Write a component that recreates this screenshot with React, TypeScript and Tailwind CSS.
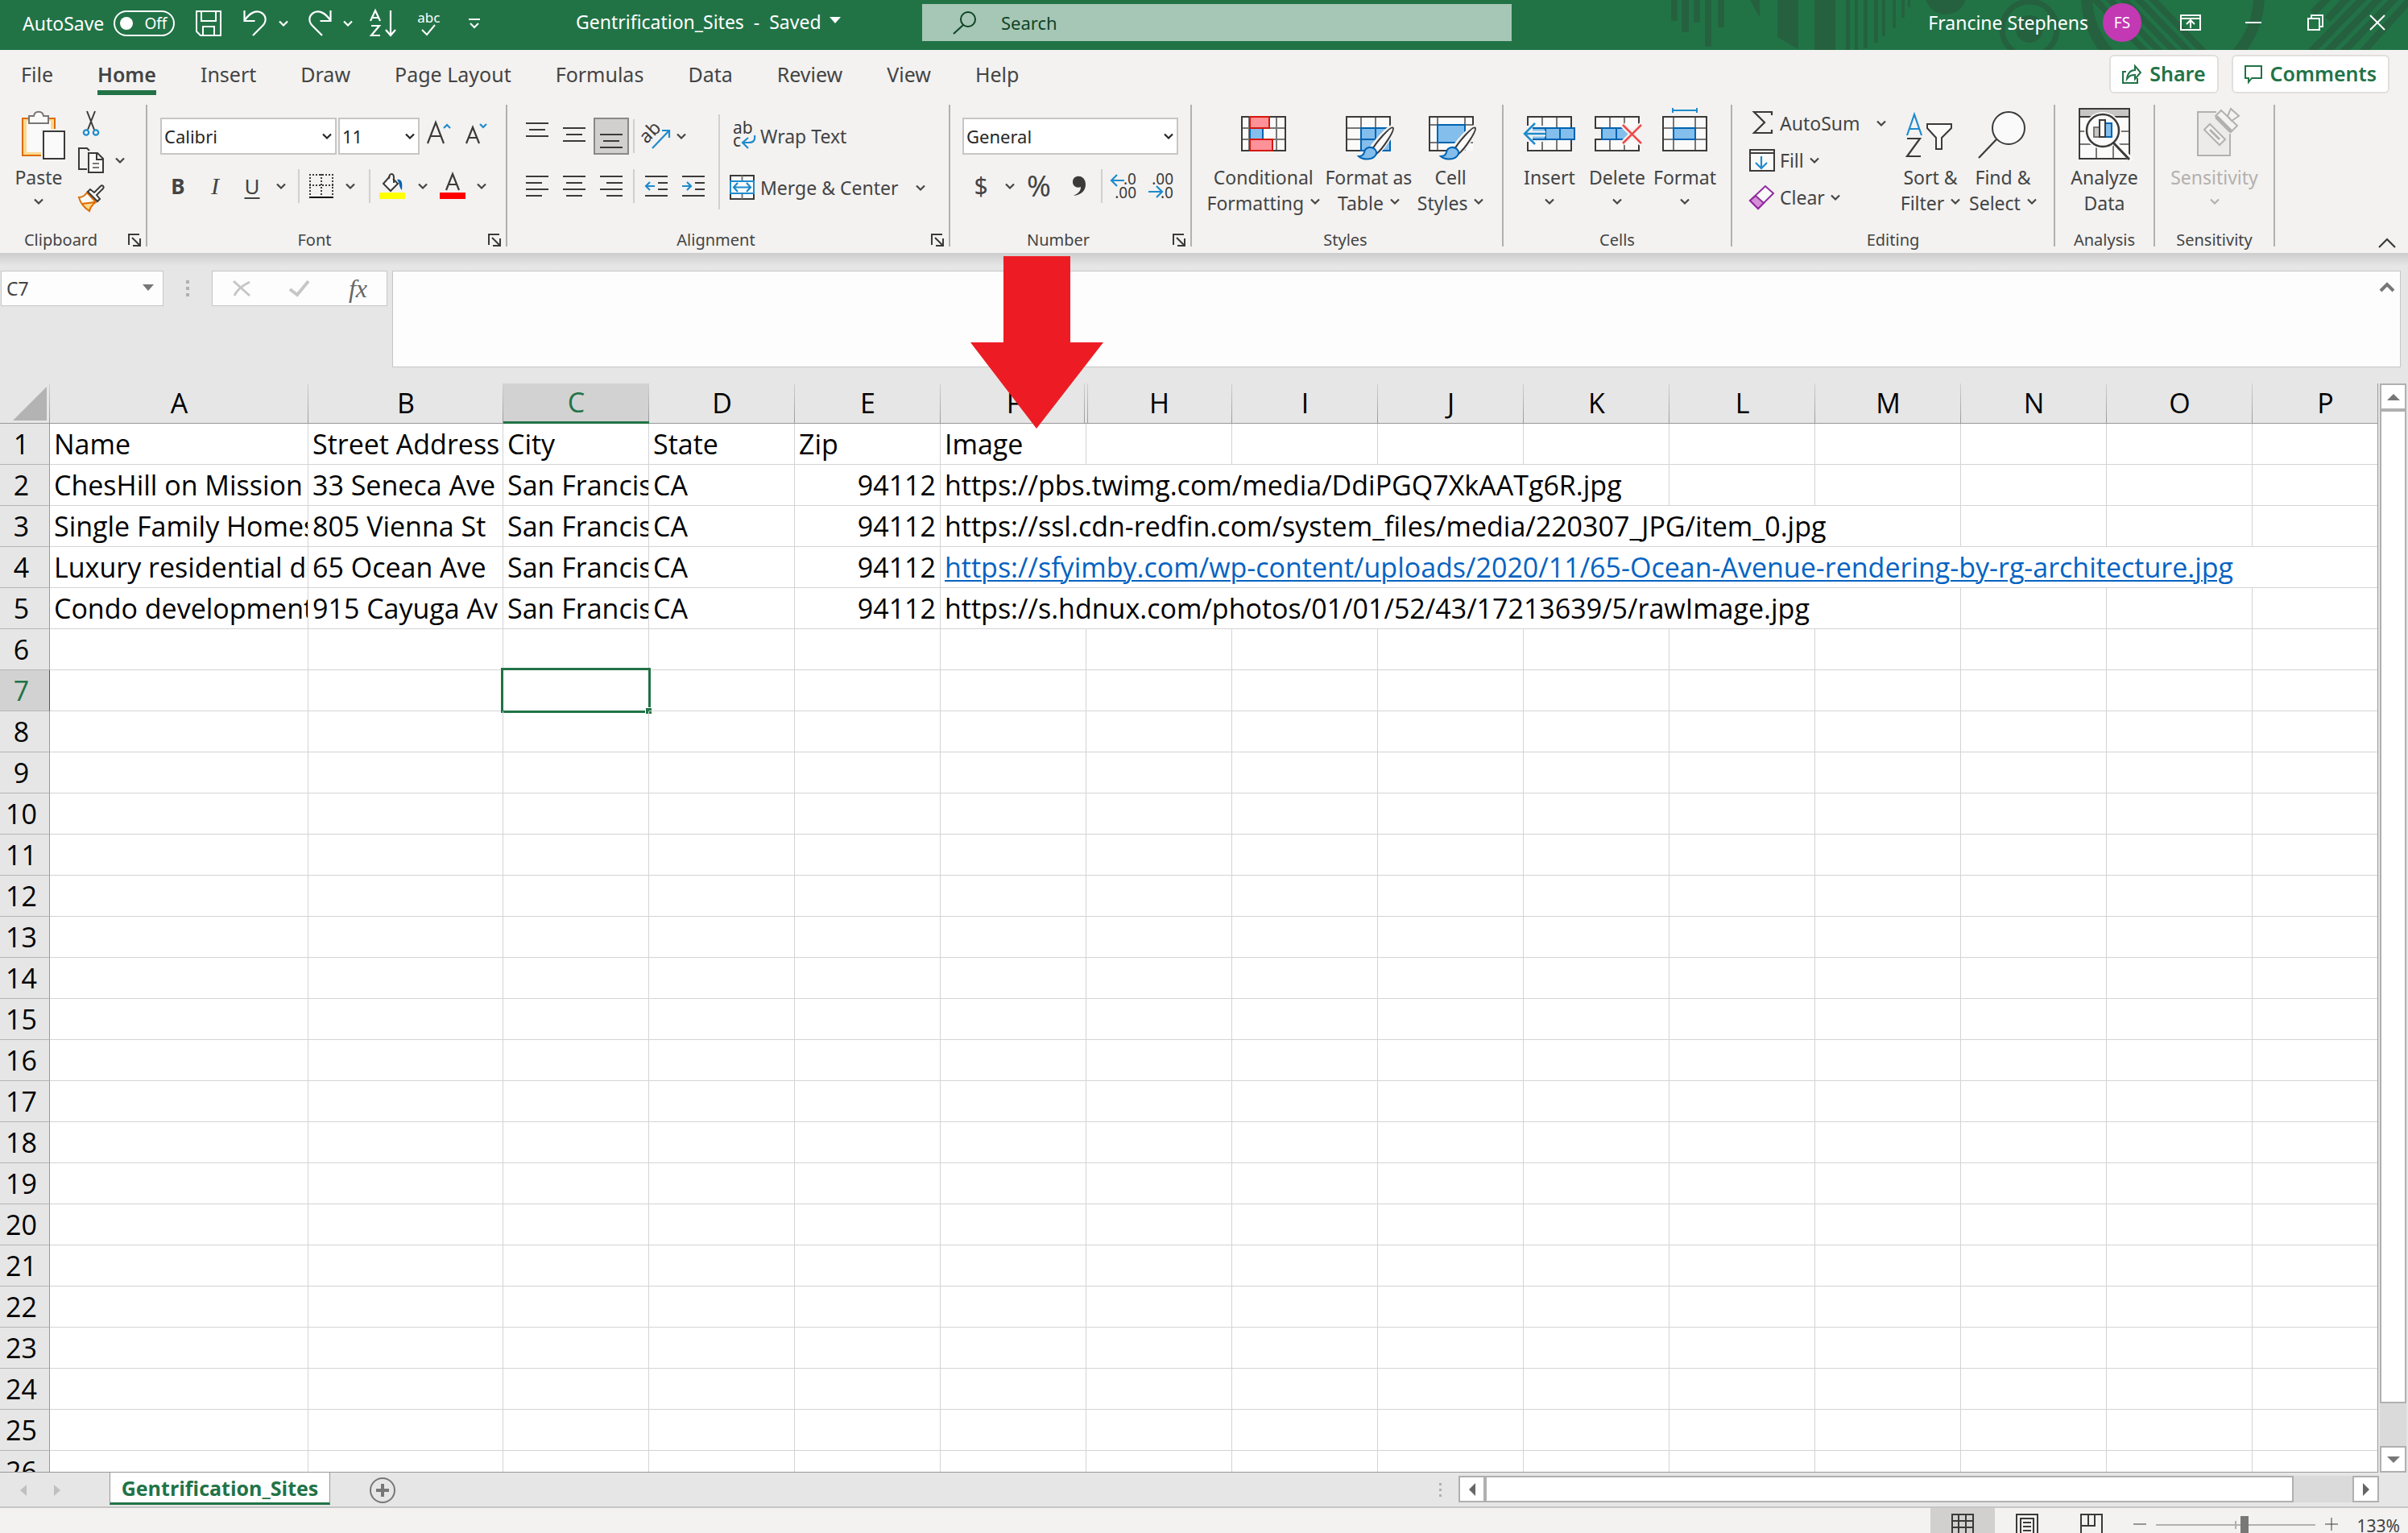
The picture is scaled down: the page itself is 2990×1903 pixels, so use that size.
import type { ReactNode } from "react";
import clsx from "clsx";

const INK = "#3b3a39";
const BLUE = "#1e8bcd";
const DEEP = "#0063b1";
const SKY = "#83beec";
const PAPER = "#fafafa";

/* ---------- data ---------- */

const TABS = ["File", "Home", "Insert", "Draw", "Page Layout", "Formulas", "Data", "Review", "View", "Help"];

const COLUMNS = ["A", "B", "C", "D", "E", "F", "H", "I", "J", "K", "L", "M", "N", "O", "P"];

type Cell = { text: string; span?: number; align?: "right"; link?: boolean };

const ROWS: Record<number, Cell[]> = {
  1: [{ text: "Name" }, { text: "Street Address" }, { text: "City" }, { text: "State" }, { text: "Zip" }, { text: "Image" }],
  2: [
    { text: "ChesHill on Mission" },
    { text: "33 Seneca Ave" },
    { text: "San Francis" },
    { text: "CA" },
    { text: "94112", align: "right" },
    { text: "https://pbs.twimg.com/media/DdiPGQ7XkAATg6R.jpg", span: 5 },
  ],
  3: [
    { text: "Single Family Homes" },
    { text: "805 Vienna St" },
    { text: "San Francis" },
    { text: "CA" },
    { text: "94112", align: "right" },
    { text: "https://ssl.cdn-redfin.com/system_files/media/220307_JPG/item_0.jpg", span: 7 },
  ],
  4: [
    { text: "Luxury residential de" },
    { text: "65 Ocean Ave" },
    { text: "San Francis" },
    { text: "CA" },
    { text: "94112", align: "right" },
    {
      text: "https://sfyimby.com/wp-content/uploads/2020/11/65-Ocean-Avenue-rendering-by-rg-architecture.jpg",
      span: 10,
      link: true,
    },
  ],
  5: [
    { text: "Condo development" },
    { text: "915 Cayuga Av" },
    { text: "San Francis" },
    { text: "CA" },
    { text: "94112", align: "right" },
    { text: "https://s.hdnux.com/photos/01/01/52/43/17213639/5/rawImage.jpg", span: 7 },
  ],
};

/* ---------- small icons ---------- */

function Svg({ w, h, children, className }: { w: number; h: number; children: ReactNode; className?: string }) {
  return (
    <svg
      width={w}
      height={h}
      viewBox={`0 0 ${w} ${h}`}
      fill="none"
      className={clsx("shrink-0 overflow-visible", className)}
      aria-hidden
    >
      {children}
    </svg>
  );
}

function Chevron({ className }: { className?: string }) {
  return (
    <Svg w={12} h={8} className={className}>
      <path d="M1 1.5l5 5 5-5" stroke="currentColor" strokeWidth="2.2" />
    </Svg>
  );
}

function Launcher() {
  return (
    <Svg w={16} h={16}>
      <path d="M1 14V1h13M5 5l9 9M15 6v9H6" stroke={INK} strokeWidth="2" />
    </Svg>
  );
}

function Lines({ rows }: { rows: [number, number, number][] }) {
  return (
    <Svg w={28} h={32}>
      {rows.map(([x1, x2, y]) => (
        <path key={y} d={`M${x1} ${y}H${x2}`} stroke={INK} strokeWidth="2" />
      ))}
    </Svg>
  );
}

function Brush() {
  return (
    <>
      <path d="M62 24c-4-1-24 22-28 30l5 5c8-5 27-31 23-35z" fill={PAPER} stroke="#f3f2f1" strokeWidth="6" />
      <path d="M62.500 24.500c-3-2-21 18-26 28l5 5c8-6 24-30 21-33z" fill={PAPER} stroke={INK} strokeWidth="2" />
      <path
        d="M40 51c-5-4-12-2-13 4-1 4-3 5-7 5 4 4 14 5 19 1 4-3 4-7 1-10z"
        fill={SKY}
        stroke={DEEP}
        strokeWidth="2"
      />
    </>
  );
}

/* ---------- title bar ---------- */

function TitlePattern() {
  return (
    <svg width="930" height="62" viewBox="2060 0 930 62" className="absolute top-0 right-0" aria-hidden>
      <g fill="#25613f">
        <path d="M2075 0h8v26h-8zM2088 0h9v40h-9zM2103 0h8v28h-8zM2117 0h8v58h-8zM2133 0h8v34h-8z" />
        <path d="M2173 0h12v22zM2207 0h26v61l-26-15zM2253 0h26v62h-26z" />
        <path d="M2292 0h5v62h-5zM2303 0h4v62h-4zM2314 0h5v60h-5zM2327 0h5v53h-5zM2337 0h4v45h-4zM2350 0h4v35h-4zM2361 0h4v22h-4zM2369 0h3v9h-3z" />
        <circle cx="2416" cy="-8" r="26" />
        <circle cx="2520" cy="36" r="17" />
      </g>
      <g stroke="#25613f" fill="none">
        <circle cx="2520" cy="36" r="34" strokeWidth="7" />
        <circle cx="2698" cy="-5" r="107" strokeWidth="14" />
        <path
          d="M2598 -4l68 70M2616 -4l68 70M2634 -4l68 70M2652 -4l68 70M2670 -4l68 70"
          strokeWidth="8"
        />
        <path
          d="M2936 -4l-68 70M2956 -4l-68 70M2976 -4l-68 70M2916 -4l-26 28M2892 -4l-20 20M2994 -2l-60 66"
          strokeWidth="9"
        />
      </g>
    </svg>
  );
}

function TitleBar() {
  return (
    <header className="relative flex h-[62px] shrink-0 items-start bg-[#217346] text-[23px] text-white">
      <TitlePattern />
      <div className="flex h-[58px] w-[715px] shrink-0 items-center pl-7">
        <label className="flex items-center gap-3">
          AutoSave
          <input type="checkbox" className="sr-only" />
          <span className="flex h-8 w-[76px] items-center justify-between rounded-full border-2 border-white pr-2 pl-1.5 text-[19px]">
            <span className="size-4 rounded-full bg-white" />
            Off
          </span>
        </label>
        <button type="button" aria-label="Save" className="ml-[26px]">
          <Svg w={32} h={32}>
            <path d="M1 1h30v30H6l-5-5zM7 1v12h18V1M9 31V20h14v11" stroke="#fff" strokeWidth="2" />
          </Svg>
        </button>
        <button type="button" aria-label="Undo" className="ml-[27px]">
          <Svg w={30} h={32}>
            <path d="M1.500 0v13h13M2 12C8 3 16-1 23 3c6 4 6 11 1 16L12 31" stroke="#fff" strokeWidth="2.200" />
          </Svg>
        </button>
        <button type="button" aria-label="Undo history" className="ml-3.5">
          <Chevron />
        </button>
        <button type="button" aria-label="Redo" className="ml-6">
          <Svg w={30} h={32}>
            <path d="M28.500 0v13h-13M28 12C22 3 14-1 7 3c-6 4-6 11-1 16l12 12" stroke="#fff" strokeWidth="2.200" />
          </Svg>
        </button>
        <button type="button" aria-label="Redo history" className="ml-3.5">
          <Chevron />
        </button>
        <button type="button" aria-label="Sort ascending" className="ml-5">
          <Svg w={34} h={32}>
            <path d="M2 13L8 0l6 13M4 9h8M3 19h10L3 31h11M27 0v30M21 24l6 7 6-7" stroke="#fff" strokeWidth="2.200" />
          </Svg>
        </button>
        <button type="button" aria-label="Spelling" className="ml-[26px] flex flex-col items-center text-[17px] leading-4">
          abc
          <Svg w={18} h={14}>
            <path d="M1 7l6 6L17 1" stroke="#fff" strokeWidth="2" />
          </Svg>
        </button>
        <button type="button" aria-label="Customize toolbar" className="ml-9">
          <Svg w={14} h={12}>
            <path d="M0 1h14M2 6l5 5 5-5" stroke="#fff" strokeWidth="2" />
          </Svg>
        </button>
      </div>
      <button type="button" className="flex h-[54px] w-[430px] shrink-0 items-center gap-2.5 whitespace-pre">
        {"Gentrification_Sites  -  Saved"}
        <Svg w={14} h={8} className="mb-1">
          <path d="M0 0h14l-7 8z" fill="#fff" />
        </Svg>
      </button>
      <label className="mt-[5px] flex h-[46px] w-[732px] items-center gap-[30px] bg-[#a6c7b5] pl-[38px] text-[22px] text-[#0e4327]">
        <Svg w={30} h={28}>
          <circle cx="19" cy="10" r="9" stroke="#0e4327" strokeWidth="2" />
          <path d="M13 17L1 28" stroke="#0e4327" strokeWidth="2" />
        </Svg>
        <input
          type="text"
          aria-label="Search"
          placeholder="Search"
          className="w-full bg-transparent outline-none placeholder:text-[#0e4327]"
        />
      </label>
      <div className="relative ml-auto flex h-14 items-center pr-7">
        <span>Francine Stephens</span>
        <span className="ml-[18px] flex size-12 items-center justify-center rounded-full bg-[#c239b3] text-[19px]">FS</span>
        <button type="button" aria-label="Ribbon display options" className="ml-12">
          <Svg w={26} h={20}>
            <path d="M1 1h24v18H1zM1 5h24M13 17V8M8 12l5-5 5 5" stroke="#fff" strokeWidth="2" />
          </Svg>
        </button>
        <button type="button" aria-label="Minimize" className="ml-[55px]">
          <Svg w={20} h={20}>
            <path d="M0 10h20" stroke="#fff" strokeWidth="2" />
          </Svg>
        </button>
        <button type="button" aria-label="Restore" className="ml-[57px]">
          <Svg w={20} h={20}>
            <path d="M1 5h14v14H1zM5 5V1h14v14h-4" stroke="#fff" strokeWidth="2" />
          </Svg>
        </button>
        <button type="button" aria-label="Close" className="ml-[57px]">
          <Svg w={20} h={20}>
            <path d="M1 1l18 18M19 1L1 19" stroke="#fff" strokeWidth="2" />
          </Svg>
        </button>
      </div>
    </header>
  );
}

function TabBar() {
  const action = "flex h-12 items-center gap-2.5 rounded-md border-2 border-[#e1dfdd] bg-white px-3.5 text-[25px] font-semibold text-[#217346]";
  return (
    <nav className="flex h-[68px] shrink-0 items-start bg-[#f3f2f1] text-[25px] text-[#444]">
      <div className="flex h-14 items-end gap-[55px] pl-[26px]">
        {TABS.map((tab) => (
          <a
            key={tab}
            href="#"
            className={clsx(
              "flex h-[46px] items-center border-b-6 leading-8",
              tab === "Home" ? "border-[#217346] font-semibold" : "border-transparent",
            )}
          >
            {tab}
          </a>
        ))}
      </div>
      <div className="mt-1.5 ml-auto flex gap-4 pr-[23px]">
        <button type="button" className={action}>
          <Svg w={24} h={24}>
            <path d="M5 9H1v14h18v-6" stroke="#217346" strokeWidth="2" />
            <path d="M6 18c1-8 5-11 10-11V2l7 8-7 8v-5c-5 0-7 1-10 5z" stroke="#217346" strokeWidth="2" />
          </Svg>
          Share
        </button>
        <button type="button" className={action}>
          <Svg w={22} h={22}>
            <path d="M1 1h20v15H9l-4 5v-5H1z" stroke="#217346" strokeWidth="2" />
          </Svg>
          Comments
        </button>
      </div>
    </nav>
  );
}

/* ---------- ribbon building blocks ---------- */

function Group({
  label,
  className,
  launcher,
  children,
}: {
  label: string;
  className: string;
  launcher?: boolean;
  children: ReactNode;
}) {
  return (
    <>
      <section aria-label={label} className={clsx("flex h-[184px] shrink-0 flex-col justify-between pb-1", className)}>
        <div className="flex h-[150px]">{children}</div>
        <div className="flex h-6 items-center">
          <span className="flex-1 text-center text-[20px] leading-6">{label}</span>
          {launcher && (
            <button type="button" aria-label={`${label} settings`} className="flex w-[30px] pl-2">
              <Launcher />
            </button>
          )}
        </div>
      </section>
      <div className="h-[176px] w-0.5 shrink-0 bg-[#b3b0ad]" />
    </>
  );
}

function Tool({ label, pressed, children }: { label: string; pressed?: boolean; children: ReactNode }) {
  return (
    <button
      type="button"
      aria-label={label}
      className={clsx(
        "mx-px flex h-[46px] w-11 items-center justify-center",
        pressed && "border-2 border-[#8a8886] bg-[#d2d0ce]",
      )}
    >
      {children}
    </button>
  );
}

function Drop({ label, className = "w-[26px]" }: { label: string; className?: string }) {
  return (
    <button type="button" aria-label={label} className={clsx("flex h-[46px] items-center justify-center", className)}>
      <Chevron />
    </button>
  );
}

function Divider({ className }: { className: string }) {
  return (
    <div className={className}>
      <div className="h-[42px] w-0.5 bg-[#d2d0ce]" />
    </div>
  );
}

function Picker({ label, value, className }: { label: string; value: string; className: string }) {
  return (
    <div className={clsx("relative h-[46px] text-[#262626]", className)}>
      <select
        aria-label={label}
        className="size-full appearance-none border-2 border-[#c8c6c4] bg-white pl-[3px] text-[22px] outline-none"
      >
        <option>{value}</option>
      </select>
      <Chevron className="pointer-events-none absolute top-[19px] right-1.5" />
    </div>
  );
}

function BigButton({
  icon,
  lines,
  drop,
  className,
  disabled,
}: {
  icon: ReactNode;
  lines: string[];
  drop?: boolean;
  className: string;
  disabled?: boolean;
}) {
  return (
    <button
      type="button"
      disabled={disabled}
      className={clsx(
        "flex flex-col items-center pt-1 text-[23px] leading-8 whitespace-nowrap",
        disabled && "text-[#b3b0ad]",
        className,
      )}
    >
      <Svg w={64} h={64} className="mb-1.5">
        {icon}
      </Svg>
      <span>{lines[0]}</span>
      <span className="flex h-8 items-center gap-2">
        {lines[1]}
        {drop && <Chevron className="mb-1" />}
      </span>
    </button>
  );
}

function SmallButton({ icon, label, children }: { icon: ReactNode; label: string; children?: ReactNode }) {
  return (
    <div className="flex h-[46px] items-center">
      <button type="button" className="flex items-center gap-1.5">
        {icon}
        {label}
      </button>
      {children}
    </div>
  );
}

/* ---------- ribbon ---------- */

function ClipboardGroup() {
  return (
    <Group label="Clipboard" className="w-[181px]" launcher>
      <BigButton
        className="w-24"
        lines={["Paste"]}
        drop
        icon={
          <>
            <path d="M12 13h40v46H12z" fill="#fbd98f" stroke="#de6c00" strokeWidth="2" />
            <path d="M17 16h30v39H17z" fill={PAPER} />
            <path d="M20 10h6c1-7 11-7 12 0h6v9H20z" fill={PAPER} stroke="#797775" strokeWidth="2" />
            <path d="M35 26h32v40H35z" fill="#f3f2f1" />
            <path d="M38 29h26v34H38z" fill={PAPER} stroke={INK} strokeWidth="2" />
          </>
        }
      />
      <div className="flex flex-col">
        <div className="flex">
          <button type="button" aria-label="Cut" className="flex h-[46px] w-[34px] items-center justify-center">
            <Svg w={20} h={32}>
              <path d="M5 1l9 23M15 1L6 24" stroke={INK} strokeWidth="2" />
              <circle cx="4" cy="27.500" r="3.200" stroke={BLUE} strokeWidth="2.200" />
              <circle cx="16" cy="27.500" r="3.200" stroke={BLUE} strokeWidth="2.200" />
            </Svg>
          </button>
        </div>
        <div className="flex">
          <button type="button" aria-label="Copy" className="flex h-[46px] w-[34px] items-center justify-center">
            <Svg w={32} h={32}>
              <path d="M11 27H1V1h10l3 3" stroke={INK} strokeWidth="2" />
              <path d="M13 7h11l7 7v17H13z" fill={PAPER} stroke={INK} strokeWidth="2" />
              <path d="M23 7v8h8" stroke={INK} strokeWidth="2" />
              <path d="M18 20h8M18 25h8" stroke="#797775" strokeWidth="2" />
            </Svg>
          </button>
          <Drop label="Copy options" className="w-[38px]" />
        </div>
        <div className="flex">
          <button type="button" aria-label="Format Painter" className="flex h-[46px] w-[34px] items-center justify-center">
            <Svg w={32} h={34}>
              <path d="M1 17c5 0 8-3 10-6l11 12c-3 2-7 5-8 11C8 30 3 25 1 17z" fill={PAPER} />
              <path d="M4 24l18-2-8 12C9 31 6 28 4 24z" fill="#fbd98f" />
              <path d="M1 17c5 0 8-3 10-6l11 12c-3 2-7 5-8 11C8 30 3 25 1 17zM5 25l16-2" stroke="#de6c00" strokeWidth="2" />
              <path d="M12 10l3-3 5 4 8-8c2-2 5 1 3 3l-8 8 4 5-3 3z" fill={PAPER} stroke={INK} strokeWidth="2" />
            </Svg>
          </button>
        </div>
      </div>
    </Group>
  );
}

function FontGroup() {
  return (
    <Group label="Font" className="w-[445px]" launcher>
      <div className="flex flex-col gap-4 pt-4 pl-[15px]">
        <div className="flex">
          <Picker label="Font name" value="Calibri" className="mx-px w-[219px]" />
          <Picker label="Font size" value="11" className="mx-px w-[101px]" />
          <Tool label="Increase font size">
            <Svg w={30} h={28} className="mb-2">
              <path d="M1 27L11 1l10 26M5 18h12" stroke={INK} strokeWidth="2.200" />
              <path d="M21 8l4-4 4 4" stroke={BLUE} strokeWidth="2.200" />
            </Svg>
          </Tool>
          <Tool label="Decrease font size">
            <Svg w={26} h={28} className="mb-2">
              <path d="M1 27L9 7l8 20M4 20h10" stroke={INK} strokeWidth="2.200" />
              <path d="M18 3l4 4 4-4" stroke={BLUE} strokeWidth="2.200" />
            </Svg>
          </Tool>
        </div>
        <div className="flex items-center">
          <Tool label="Bold">
            <span className="text-[26px] leading-8 font-bold">B</span>
          </Tool>
          <Tool label="Italic">
            <span className="font-[family-name:'Liberation_Serif',serif] text-[30px] leading-8 italic">I</span>
          </Tool>
          <Tool label="Underline">
            <span className="text-[26px] leading-8 underline decoration-2 underline-offset-4">U</span>
          </Tool>
          <Drop label="Underline style" />
          <Divider className="w-3.5 pl-2" />
          <Tool label="Borders">
            <Svg w={30} h={30}>
              <path d="M0 1h30M0 14h30M1 0v28M15 0v28M29 0v28" stroke={INK} strokeWidth="2" strokeDasharray="2 2" />
              <path d="M0 29h30" stroke="#000" strokeWidth="2" />
            </Svg>
          </Tool>
          <Drop label="Border style" />
          <Divider className="w-4 pl-2.5" />
          <Tool label="Fill color">
            <Svg w={32} h={32}>
              <path d="M13 4L5 13l9 9 9-9-6-6" fill={PAPER} stroke={INK} strokeWidth="2" />
              <path d="M12 7c0-8 7-8 6 0v5" stroke={INK} strokeWidth="2" />
              <path d="M22 8c6-1 7 4 6 13-4-4-2-8-6-13z" fill={DEEP} />
              <path d="M0 24h32v8H0z" fill="#ff0" />
            </Svg>
          </Tool>
          <Drop label="Fill color options" className="w-[29px]" />
          <Tool label="Font color">
            <Svg w={32} h={32}>
              <path d="M8 21l8-20 8 20M11 14h10" stroke={INK} strokeWidth="2.200" />
              <path d="M0 24h32v8H0z" fill="#f00" />
            </Svg>
          </Tool>
          <Drop label="Font color options" />
        </div>
      </div>
    </Group>
  );
}

function AlignmentGroup() {
  return (
    <Group label="Alignment" className="w-[548px]" launcher>
      <div className="flex flex-col gap-4 pt-4 pl-3.5">
        <div className="flex items-center">
          <Tool label="Top align">
            <Lines rows={[[0, 28, 0], [4, 24, 8], [0, 28, 16]]} />
          </Tool>
          <Tool label="Middle align">
            <Lines rows={[[0, 28, 6], [4, 24, 14], [0, 28, 22]]} />
          </Tool>
          <Tool label="Bottom align" pressed>
            <Lines rows={[[0, 28, 14], [4, 24, 22], [0, 28, 30]]} />
          </Tool>
          <Divider className="w-2.5 pl-1" />
          <Tool label="Orientation">
            <Svg w={32} h={32}>
              <text x="2" y="22" fontSize="23" fill={INK} transform="rotate(-45 8 22)">
                ab
              </text>
              <path d="M11 31L31 10M23 9h9v9" stroke={BLUE} strokeWidth="2.200" />
            </Svg>
          </Tool>
          <Drop label="Orientation options" className="w-4" />
        </div>
        <div className="flex items-center">
          <Tool label="Align left">
            <Lines rows={[[0, 28, 4], [0, 20, 12], [0, 28, 20], [0, 20, 28]]} />
          </Tool>
          <Tool label="Center">
            <Lines rows={[[0, 28, 4], [4, 24, 12], [0, 28, 20], [4, 24, 28]]} />
          </Tool>
          <Tool label="Align right">
            <Lines rows={[[0, 28, 4], [8, 28, 12], [0, 28, 20], [8, 28, 28]]} />
          </Tool>
          <Divider className="w-2.5 pl-1" />
          <Tool label="Decrease indent">
            <Svg w={28} h={32}>
              <path d="M0 4h28M16 12h12M16 20h12M0 28h28" stroke={INK} strokeWidth="2" />
              <path d="M12 16H1M6 11l-5 5 5 5" stroke={BLUE} strokeWidth="2.200" />
            </Svg>
          </Tool>
          <Tool label="Increase indent">
            <Svg w={28} h={32}>
              <path d="M0 4h28M16 12h12M16 20h12M0 28h28" stroke={INK} strokeWidth="2" />
              <path d="M0 16h11M6 11l5 5-5 5" stroke={BLUE} strokeWidth="2.200" />
            </Svg>
          </Tool>
        </div>
      </div>
      <div className="mt-3 ml-2 h-[118px] w-0.5 bg-[#d2d0ce]" />
      <div className="flex flex-col gap-[18px] pt-4 pl-3 text-[23px]">
        <SmallButton
          label="Wrap Text"
          icon={
            <Svg w={32} h={34}>
              <text x="4" y="14" fontSize="21" fill={INK}>
                ab
              </text>
              <text x="4" y="30" fontSize="21" fill={INK}>
                c
              </text>
              <path d="M31 16c1 7-2 9-8 9h-6M23 19l-7 6 7 7" stroke={BLUE} strokeWidth="2.200" />
            </Svg>
          }
        />
        <SmallButton
          label="Merge & Center"
          icon={
            <Svg w={32} h={32}>
              <path d="M1 1h29v29H1z" fill={PAPER} stroke={INK} strokeWidth="2" />
              <path d="M15.500 1v6M15.500 24v6" stroke="#797775" strokeWidth="2" />
              <path d="M1 8h29v15H1z" fill={PAPER} stroke={BLUE} strokeWidth="2" />
              <path d="M5 15.500h21M10 10l-5 5.500 5 5.500M21 10l5 5.500-5 5.500" stroke={BLUE} strokeWidth="2.200" />
            </Svg>
          }
        >
          <Drop label="Merge options" className="ml-3.5 w-[26px]" />
        </SmallButton>
      </div>
    </Group>
  );
}

function NumberGroup() {
  return (
    <Group label="Number" className="w-[298px]" launcher>
      <div className="flex flex-col gap-4 pt-4 pl-[15px]">
        <Picker label="Number format" value="General" className="w-[268px]" />
        <div className="flex items-center">
          <Tool label="Accounting format">
            <span className="text-[30px] leading-8">$</span>
          </Tool>
          <Drop label="Accounting options" />
          <Tool label="Percent style">
            <span className="text-[36px] leading-8">%</span>
          </Tool>
          <div className="mx-1 flex">
            <Tool label="Comma style">
              <Svg w={16} h={26}>
                <path d="M1 25c6-3 9-6 9-11-5 2-10-1-10-6 0-10 16-10 16 3 0 8-6 13-15 14z" fill={INK} />
              </Svg>
            </Tool>
          </div>
          <Divider className="w-[5px]" />
          <Tool label="Increase decimal">
            <Svg w={32} h={32}>
              <text x="32" y="14" fontSize="19" textAnchor="end" fill={INK}>
                .0
              </text>
              <text x="32" y="31" fontSize="19" textAnchor="end" fill={INK}>
                .00
              </text>
              <path d="M17 9H1M8 2L1 9l7 7" stroke={BLUE} strokeWidth="2.200" />
            </Svg>
          </Tool>
          <Tool label="Decrease decimal">
            <Svg w={32} h={32}>
              <text x="32" y="14" fontSize="19" textAnchor="end" fill={INK}>
                .00
              </text>
              <text x="32" y="31" fontSize="19" textAnchor="end" fill={INK}>
                .0
              </text>
              <path d="M1 23h16M11 16l7 7-7 7" stroke={BLUE} strokeWidth="2.200" />
            </Svg>
          </Tool>
        </div>
      </div>
    </Group>
  );
}

function StylesGroup() {
  return (
    <Group label="Styles" className="w-[385px] pl-4 pr-5">
      <BigButton
        className="w-[146px]"
        lines={["Conditional", "Formatting"]}
        drop
        icon={
          <>
            <path d="M5 11h54v42H5z" fill={PAPER} />
            <path d="M5 25h54M5 39h54M14 11v42M48 11v42" stroke="#797775" strokeWidth="2" />
            <path d="M5 11h54v42H5z" stroke={INK} strokeWidth="2" />
            <path d="M15 25h16v14H15z" fill={SKY} stroke={DEEP} strokeWidth="2" />
            <path d="M15 11h24v14H15zM15 39h28v14H15z" fill="#ff9199" stroke="#d3180c" strokeWidth="2" />
          </>
        }
      />
      <BigButton
        className="w-[116px]"
        lines={["Format as", "Table"]}
        drop
        icon={
          <>
            <path d="M5 11h54v42H5z" fill={PAPER} />
            <path d="M23 11v42M41 11v14M5 25h54M5 39h18" stroke="#797775" strokeWidth="2" />
            <path d="M59 25V11H5v42h18" stroke={INK} strokeWidth="2" />
            <path d="M23 25h36v28H23zM41 25v28M23 39h36" fill={SKY} stroke={DEEP} strokeWidth="2" />
            <Brush />
          </>
        }
      />
      <BigButton
        className="w-[88px]"
        lines={["Cell", "Styles"]}
        drop
        icon={
          <>
            <path d="M6 11h54v42H6z" fill={PAPER} />
            <path d="M16 11v42M50 11v42M6 21h54M6 43h54" stroke="#797775" strokeWidth="2" />
            <path d="M60 25V11H6v42h24" stroke={INK} strokeWidth="2" />
            <path d="M16 21h34v22H16z" fill={SKY} stroke={DEEP} strokeWidth="2" />
            <Brush />
          </>
        }
      />
    </Group>
  );
}

function CellsGroup() {
  return (
    <Group label="Cells" className="w-[282px] pr-[15px] pl-[15px]">
      <BigButton
        className="w-[84px]"
        lines={["Insert"]}
        drop
        icon={
          <>
            <path d="M5 11h54v42H5z" fill={PAPER} stroke={INK} strokeWidth="2" />
            <path d="M23 12v40M41 12v40" stroke="#797775" strokeWidth="2" />
            <path d="M2 22h28v20H2z" fill="#f3f2f1" />
            <path d="M11 25h52v14H11M27 25v14M45 25v14" fill={SKY} stroke={DEEP} strokeWidth="2" />
            <path d="M10 32h17" stroke="#f3f2f1" strokeWidth="7" />
            <path d="M27 32H1M14 19L1 32l13 13" stroke={BLUE} strokeWidth="2.500" />
          </>
        }
      />
      <BigButton
        className="w-[84px]"
        lines={["Delete"]}
        drop
        icon={
          <>
            <path d="M5 11h54v14H5zM5 39h54v14H5z" fill={PAPER} />
            <path d="M23 11v14M41 11v14M23 39v14M41 39v14" stroke="#797775" strokeWidth="2" />
            <path d="M13 25H5V11h54v14M13 39H5v14h54V39" stroke={INK} strokeWidth="2" />
            <path d="M42 25H13v14h29l7-7zM31 25v14" fill={SKY} stroke={DEEP} strokeWidth="2" />
            <path d="M39 21l23 23M62 21L39 44" stroke="#f3f2f1" strokeWidth="7" />
            <path d="M39 21l23 23M62 21L39 44" stroke="#f04848" strokeWidth="2.500" />
          </>
        }
      />
      <BigButton
        className="w-[84px]"
        lines={["Format"]}
        drop
        icon={
          <>
            <path d="M17 3h30M17 0v6M47 0v6" stroke={BLUE} strokeWidth="2" />
            <path d="M5 11h54v42H5z" fill={PAPER} />
            <path d="M18 11v42M45 11v42M5 25h54M5 39h54" stroke="#797775" strokeWidth="2" />
            <path d="M5 11h54v42H5z" stroke={INK} strokeWidth="2" />
            <path d="M18 25h27v14H18z" fill={SKY} stroke={DEEP} strokeWidth="2" />
          </>
        }
      />
    </Group>
  );
}

function EditingGroup() {
  return (
    <Group label="Editing" className="w-[399px]">
      <div className="flex w-[200px] flex-col pl-[21px] text-[23px]">
        <SmallButton
          label="AutoSum"
          icon={
            <Svg w={32} h={30}>
              <path d="M28 5V1H6l13 13L6 27h22v-4" stroke={INK} strokeWidth="2.200" />
            </Svg>
          }
        >
          <Drop label="AutoSum options" className="ml-3.5 w-[26px]" />
        </SmallButton>
        <SmallButton
          label="Fill"
          icon={
            <Svg w={32} h={28}>
              <path d="M1 1h30v26H1zM1 5h30" fill={PAPER} stroke={INK} strokeWidth="2" />
              <path d="M15 9v14M8 17l7 7 7-7" stroke={BLUE} strokeWidth="2.200" />
            </Svg>
          }
        >
          <Drop label="Fill options" />
        </SmallButton>
        <SmallButton
          label="Clear"
          icon={
            <Svg w={32} h={30}>
              <path d="M1 19L20 1l10 9-19 19z" fill={PAPER} stroke="#9229a0" strokeWidth="2" />
              <path d="M1 19l7-6 10 9-7 7z" fill="#d48fd6" stroke="#9229a0" strokeWidth="2" />
            </Svg>
          }
        >
          <Drop label="Clear options" />
        </SmallButton>
      </div>
      <BigButton
        className="w-[92px]"
        lines={["Sort &", "Filter"]}
        drop
        icon={
          <>
            <path d="M3 34L12 8l9 26M6 26h12" stroke={BLUE} strokeWidth="2.200" />
            <path d="M3 38h16L3 60h17" stroke={INK} strokeWidth="2.200" />
            <path d="M28 20h30v5L46 37v14h-7V37L28 25z" fill={PAPER} stroke={INK} strokeWidth="2" />
          </>
        }
      />
      <BigButton
        className="w-[88px]"
        lines={["Find &", "Select"]}
        drop
        icon={
          <>
            <circle cx="39" cy="25" r="20" fill={PAPER} stroke={INK} strokeWidth="2" />
            <path d="M24 39L2 62" stroke={INK} strokeWidth="2.200" />
          </>
        }
      />
    </Group>
  );
}

function Ribbon() {
  return (
    <div className="flex h-[184px] shrink-0 bg-[#f3f2f1] text-[#444]">
      <ClipboardGroup />
      <FontGroup />
      <AlignmentGroup />
      <NumberGroup />
      <StylesGroup />
      <CellsGroup />
      <EditingGroup />
      <Group label="Analysis" className="w-[122px]">
        <BigButton
          className="w-full"
          lines={["Analyze", "Data"]}
          icon={
            <>
              <path d="M1 1h62v62H1z" fill={PAPER} />
              <path d="M1 1h62v10H1z" fill="#c8c6c4" />
              <path d="M1 29h62M1 45h62M22 45v18M43 45v18" stroke="#797775" strokeWidth="2" />
              <path d="M1 11h62M1 1h62v62H1z" stroke={INK} strokeWidth="2" />
              <circle cx="30" cy="28" r="23" fill={PAPER} />
              <path d="M44 42l22 23" stroke={PAPER} strokeWidth="6" />
              <circle cx="30" cy="28" r="20" stroke={INK} strokeWidth="2.500" />
              <path d="M43 43l20 21" stroke={INK} strokeWidth="3" />
              <path d="M19 24h7v12h-7z" fill="#c8c6c4" stroke="#797775" strokeWidth="2" />
              <path d="M33 19h8v17h-8z" fill={SKY} stroke={DEEP} strokeWidth="2" />
              <path d="M26 15h7v21h-7z" fill={PAPER} stroke={INK} strokeWidth="2" />
            </>
          }
        />
      </Group>
      <Group label="Sensitivity" className="w-[147px]">
        <BigButton
          className="w-full"
          lines={["Sensitivity"]}
          drop
          disabled
          icon={
            <g stroke="#b3b0ad" strokeWidth="2">
              <path d="M34 5H11v54h40V32" fill="#edebe9" />
              <path d="M26 20l19 19-7 7-19-19z" fill="#f3f2f1" />
              <path d="M26 27l12 12" strokeWidth="3" />
              <path d="M40 3l20 19-8 8-19-20z" fill="#f3f2f1" />
              <path d="M34 11l18 18" strokeWidth="5" />
              <path d="M48 10l4-9 10 9-9 6z" fill="#f3f2f1" />
            </g>
          }
        />
      </Group>
      <button type="button" aria-label="Collapse the ribbon" className="mt-auto mr-[15px] mb-1.5 ml-auto">
        <Svg w={22} h={12}>
          <path d="M1 11L11 1l10 10" stroke={INK} strokeWidth="2.200" />
        </Svg>
      </button>
    </div>
  );
}

/* ---------- formula bar ---------- */

function FormulaBar() {
  return (
    <div className="flex h-[162px] shrink-0 items-start bg-linear-to-b from-[#cdcdcd] via-[#e6e6e6] via-10% to-[#e6e6e6] pt-[22px] pr-[9px] pl-px">
      <div className="relative h-11 w-[202px] shrink-0">
        <input
          aria-label="Name box"
          defaultValue="C7"
          className="size-full border border-[#c6c6c6] bg-[#fdfdfd] pl-1.5 text-[23px] text-[#444] outline-none"
        />
        <Svg w={14} h={8} className="absolute top-[17px] right-3">
          <path d="M0 0h14l-7 8z" fill="#777" />
        </Svg>
      </div>
      <Svg w={60} h={44}>
        <path d="M28 12h4v4h-4zM28 20h4v4h-4zM28 28h4v4h-4z" fill="#b0b0b0" />
      </Svg>
      <div className="flex h-11 w-[218px] shrink-0 items-center justify-between border border-[#c6c6c6] bg-[#fdfdfd] px-6">
        <button type="button" aria-label="Cancel">
          <Svg w={24} h={20}>
            <path d="M2 1l20 18M22 2C14 6 6 12 3 19" stroke="#c6c6c6" strokeWidth="3" />
          </Svg>
        </button>
        <button type="button" aria-label="Enter">
          <Svg w={26} h={20}>
            <path d="M1 11l9 7L24 1" stroke="#c6c6c6" strokeWidth="4" />
          </Svg>
        </button>
        <button
          type="button"
          aria-label="Insert function"
          className="font-[family-name:'Liberation_Serif',serif] text-[32px] leading-8 text-[#666] italic"
        >
          fx
        </button>
      </div>
      <div className="relative ml-1.5 h-[120px] flex-1">
        <textarea aria-label="Formula" className="size-full resize-none border border-[#c6c6c6] bg-[#fdfdfd] outline-none" />
        <button type="button" aria-label="Collapse formula bar" className="absolute top-[15px] right-2 flex">
          <Svg w={18} h={12}>
            <path d="M1 10l8-8 8 8" stroke="#777" strokeWidth="4" />
          </Svg>
        </button>
      </div>
    </div>
  );
}

/* ---------- grid ---------- */

function HeaderEdge({ className }: { className: string }) {
  return <span className={clsx("absolute top-0 h-full w-px bg-linear-to-b from-[#d0d0d0] to-[#999]", className)} />;
}

function DataRow({ row }: { row: number }) {
  const cells = ROWS[row] ?? [];
  const used = cells.reduce((n, c) => n + (c.span ?? 1), 0);
  const selected = row === 7;
  return (
    <tr className="h-[51px]">
      <th
        scope="row"
        className={clsx(
          "h-[51px] border-r border-b border-b-[#b5b5b5] pr-2 font-normal",
          selected ? "border-r-[#217346] bg-[#d2d2d2] text-[#217346]" : "border-r-[#999] bg-[#e6e6e6]",
        )}
      >
        {row}
      </th>
      {cells.map((cell, i) => (
        <td
          key={i}
          colSpan={cell.span}
          className={clsx(
            "overflow-hidden border-r border-b border-[#d4d4d4] px-[5px] whitespace-nowrap",
            cell.align === "right" && "text-right",
          )}
        >
          {cell.link ? (
            <a href="#" className="text-[#0563c1] underline decoration-2 underline-offset-3">
              {cell.text}
            </a>
          ) : (
            cell.text
          )}
        </td>
      ))}
      {COLUMNS.slice(used).map((col) => (
        <td key={col} className="relative border-r border-b border-[#d4d4d4]">
          {selected && col === "C" && (
            <span className="absolute -inset-[3px] border-3 border-[#217346]">
              <span className="absolute -right-1 -bottom-1 size-2 border-t border-l border-white bg-[#217346]" />
            </span>
          )}
        </td>
      ))}
    </tr>
  );
}

function Grid() {
  return (
    <div className="min-w-0 flex-1 overflow-hidden border-r border-b border-[#999] bg-white">
      <table className="w-full table-fixed border-separate border-spacing-0 font-[family-name:'Open_Sans',sans-serif] text-[34px] leading-[50px] text-black">
        <colgroup>
          <col className="w-[62px]" />
          {COLUMNS.map((col) => (
            <col key={col} className={clsx(col === "A" ? "w-[321px]" : col === "B" ? "w-[242px]" : "w-[181px]")} />
          ))}
        </colgroup>
        <thead className="leading-[47px]">
          <tr className="h-[50px]">
            <th className="relative border-b border-[#999] bg-[#e6e6e6] p-0">
              <Svg w={42} h={42} className="ml-4">
                <path d="M42 0v42H0z" fill="#b3b3b3" />
              </Svg>
              <HeaderEdge className="right-0" />
            </th>
            {COLUMNS.map((col) => (
              <th
                key={col}
                scope="col"
                className={clsx(
                  "relative h-[50px] p-0 font-normal",
                  col === "C" ? "border-b-3 border-[#217346] bg-[#d2d2d2] text-[#217346]" : "border-b border-[#999] bg-[#e6e6e6]",
                )}
              >
                {col === "H" && <HeaderEdge className="left-px" />}
                {col}
                {col !== "P" && <HeaderEdge className={col === "F" ? "right-0.5" : "right-0"} />}
              </th>
            ))}
          </tr>
        </thead>
        <tbody>
          {Array.from({ length: 26 }, (_, i) => (
            <DataRow key={i} row={i + 1} />
          ))}
        </tbody>
      </table>
    </div>
  );
}

const scrollButton = "flex size-[33px] shrink-0 items-center justify-center border-2 border-[#b0b0b0] bg-white";

function VerticalScroll() {
  return (
    <div className="flex w-[37px] shrink-0 flex-col items-center bg-[#e6e6e6]">
      <button type="button" aria-label="Scroll up" className={scrollButton}>
        <Svg w={16} h={8}>
          <path d="M0 8h16L8 0z" fill="#777" />
        </Svg>
      </button>
      <div className="flex w-[33px] flex-1 flex-col bg-[#dadada]">
        <div className="flex-[1234] border-2 border-[#b0b0b0] bg-white" />
        <div className="flex-[53]" />
      </div>
      <button type="button" aria-label="Scroll down" className={scrollButton}>
        <Svg w={16} h={8}>
          <path d="M0 0h16L8 8z" fill="#777" />
        </Svg>
      </button>
    </div>
  );
}

function SheetBar() {
  return (
    <div className="flex h-11 shrink-0 items-start border-b-2 border-[#c6c6c6] bg-[#e6e6e6] pr-9">
      <div className="flex h-11 w-[136px] items-center gap-[34px] pl-[25px]">
        <button type="button" aria-label="Previous sheet">
          <Svg w={8} h={14}>
            <path d="M8 0v14L0 7z" fill="#c0c0c0" />
          </Svg>
        </button>
        <button type="button" aria-label="Next sheet">
          <Svg w={8} h={14}>
            <path d="M0 0v14l8-7z" fill="#c0c0c0" />
          </Svg>
        </button>
      </div>
      <button
        type="button"
        className="h-10 w-[274px] border-x border-b-3 border-x-[#999] border-b-[#217346] bg-white font-[family-name:'Open_Sans',sans-serif] text-[25px] leading-9 font-bold text-[#217346]"
      >
        Gentrification_Sites
      </button>
      <button type="button" aria-label="New sheet" className="mt-1.5 ml-[49px]">
        <Svg w={32} h={32}>
          <circle cx="16" cy="16" r="15" stroke="#777" strokeWidth="2" />
          <path d="M8 16h16M16 8v16" stroke="#777" strokeWidth="4" />
        </Svg>
      </button>
      <div className="mt-1 ml-auto flex items-center">
        <Svg w={30} h={33}>
          <path d="M6 9h3v3H6zM6 16h3v3H6zM6 23h3v3H6z" fill="#b0b0b0" />
        </Svg>
        <button type="button" aria-label="Scroll left" className={scrollButton}>
          <Svg w={8} h={16}>
            <path d="M8 0v16L0 8z" fill="#666" />
          </Svg>
        </button>
        <div className="flex h-[33px] w-[1077px] bg-[#dadada]">
          <div className="w-[1004px] border-2 border-[#b0b0b0] bg-white" />
        </div>
        <button type="button" aria-label="Scroll right" className={scrollButton}>
          <Svg w={8} h={16}>
            <path d="M0 0v16l8-8z" fill="#666" />
          </Svg>
        </button>
      </div>
    </div>
  );
}

function StatusBar() {
  const view = "flex h-[31px] w-20 items-start justify-center overflow-hidden pt-[7px]";
  return (
    <footer className="flex h-[31px] shrink-0 items-start justify-end overflow-hidden bg-[#f3f2f1] pr-2.5 text-[#444]">
      <button type="button" aria-label="Normal view" className={clsx(view, "bg-[#d2d0ce]")}>
        <Svg w={28} h={28}>
          <path d="M1 1h26v26H1zM1 9h26M1 17h26M9 1v26M18 1v26" stroke={INK} strokeWidth="2" />
        </Svg>
      </button>
      <button type="button" aria-label="Page layout view" className={view}>
        <Svg w={28} h={28}>
          <path d="M1 1h26v26H1zM6 6h16v21H6zM9 11h10M9 16h10M9 21h10" stroke={INK} strokeWidth="2" />
        </Svg>
      </button>
      <button type="button" aria-label="Page break preview" className={view}>
        <Svg w={28} h={28}>
          <path d="M1 27V1h26v26M1 15h17V1M10 1v14" stroke={INK} strokeWidth="2" />
        </Svg>
      </button>
      <button type="button" aria-label="Zoom out" className="mt-3 ml-3">
        <Svg w={16} h={16}>
          <path d="M0 8h16" stroke={INK} />
        </Svg>
      </button>
      <div className="relative mx-3 mt-2.5 flex w-[198px]">
        <span className="absolute top-1.5 left-[98px] h-2.5 w-0.5 bg-[#b3b0ad]" />
        <span className="absolute top-2.5 left-0 h-0.5 w-full bg-[#b3b0ad]" />
        <input
          type="range"
          aria-label="Zoom"
          min={0}
          max={100}
          defaultValue={56}
          className="relative h-[22px] w-full appearance-none bg-transparent [&::-webkit-slider-thumb]:h-[22px] [&::-webkit-slider-thumb]:w-2.5 [&::-webkit-slider-thumb]:appearance-none [&::-webkit-slider-thumb]:bg-[#7a7876]"
        />
      </div>
      <button type="button" aria-label="Zoom in" className="mt-3">
        <Svg w={16} h={16}>
          <path d="M0 8h16M8 0v16" stroke={INK} />
        </Svg>
      </button>
      <span className="mt-2.5 ml-6 text-[21px] leading-6">133%</span>
    </footer>
  );
}

export default function App() {
  return (
    <div className="relative flex h-screen w-full flex-col overflow-hidden bg-[#e6e6e6] font-[family-name:'Noto_Sans','Liberation_Sans',sans-serif]">
      <TitleBar />
      <TabBar />
      <Ribbon />
      <FormulaBar />
      <div className="flex min-h-0 flex-1">
        <Grid />
        <VerticalScroll />
      </div>
      <SheetBar />
      <StatusBar />
      <svg
        width="166"
        height="214"
        viewBox="0 0 166 214"
        className="pointer-events-none absolute top-[318px] left-[1205px]"
        aria-hidden
      >
        <path d="M41 0h83v107h41l-83 107L0 107h41z" fill="#ed1c24" />
      </svg>
    </div>
  );
}
